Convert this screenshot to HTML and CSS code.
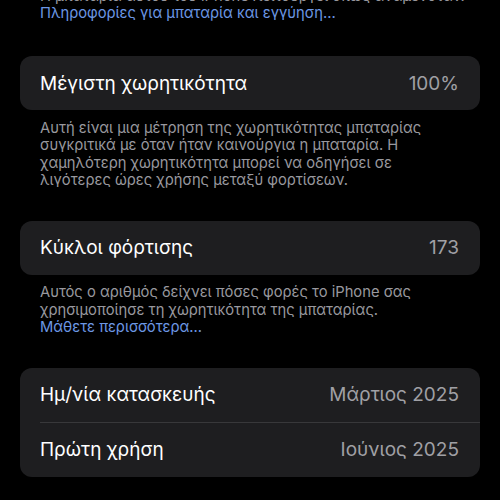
FILE: index.html
```html
<!DOCTYPE html>
<html lang="el">
<head>
<meta charset="utf-8">
<link rel="stylesheet" href="styles.css">
</head>
<body>
<div class="page">
  <p class="footer top">Η μπαταρία αυτού του iPhone λειτουργεί όπως αναμενόταν.<br><a class="link">Πληροφορίες για μπαταρία και εγγύηση...</a></p>

  <div class="card">
    <div class="row"><span class="label">Μέγιστη χωρητικότητα</span><span class="value">100%</span></div>
  </div>
  <p class="footer">Αυτή είναι μια μέτρηση της χωρητικότητας μπαταρίας συγκριτικά με όταν ήταν καινούργια η μπαταρία. Η χαμηλότερη χωρητικότητα μπορεί να οδηγήσει σε λιγότερες ώρες χρήσης μεταξύ φορτίσεων.</p>

  <div class="card">
    <div class="row"><span class="label">Κύκλοι φόρτισης</span><span class="value">173</span></div>
  </div>
  <p class="footer">Αυτός ο αριθμός δείχνει πόσες φορές το iPhone σας χρησιμοποίησε τη χωρητικότητα της μπαταρίας.<br><a class="link">Μάθετε περισσότερα...</a></p>

  <div class="card">
    <div class="row"><span class="label">Ημ/νία κατασκευής</span><span class="value">Μάρτιος 2025</span></div>
    <div class="row"><span class="label">Πρώτη χρήση</span><span class="value">Ιούνιος 2025</span></div>
  </div>
</div>
</body>
</html>
```
FILE: styles.css
```css
html, body {
  margin: 0;
  padding: 0;
  background: #000;
}
body {
  font-family: Inter, "Noto Sans", sans-serif;
  color: #fff;
  width: 500px;
  height: 500px;
  overflow: hidden;
}
.page {
  padding: 0 20px;
}
.card {
  background: #1e1e20;
  border-radius: 12px;
  padding-left: 20px;
}
.row {
  display: flex;
  justify-content: space-between;
  align-items: center;
  height: 54px;
  padding-right: 21px;
  font-size: 19px;
}
.row + .row {
  border-top: 1px solid #38383a;
}
.label {
  color: #fff;
}
.value {
  color: #a0a0a5;
}
.footer {
  margin: 0;
  padding: 9.5px 40px 31px 20px;
  font-size: 14.75px;
  line-height: 17.5px;
  color: #98989e;
}
.footer.top {
  margin-top: -12.5px;
  padding-top: 0;
  padding-right: 0;
  padding-bottom: 33.5px;
  white-space: nowrap;
}
.link {
  color: #6c97e4;
}
```
